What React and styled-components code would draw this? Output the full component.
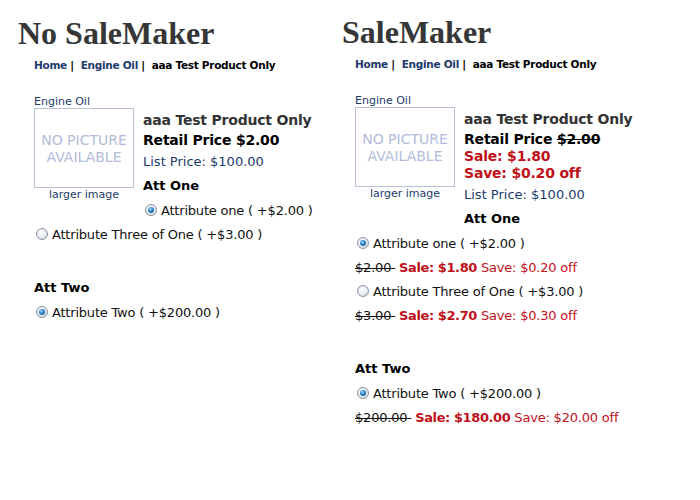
import React from 'react';
import styled, { createGlobalStyle } from 'styled-components';

const Global = createGlobalStyle`
  body {
    margin: 0;
    background: #fff;
    font-family: "DejaVu Sans", Verdana, sans-serif;
    color: #000;
  }
`;

const Page = styled.div`
  display: flex;
  width: 700px;
  height: 500px;
`;

const Column = styled.div`
  width: 321px;
  padding-left: 34px;
  box-sizing: border-box;
  padding-top: ${(p) => p.$top}px;
`;

const Heading = styled.h1`
  margin: 0 0 0 ${(p) => p.$offset}px;
  font-family: "Liberation Serif", "Times New Roman", serif;
  font-size: 32px;
  line-height: 36px;
  font-weight: bold;
  color: #363636;
`;

const Crumbs = styled.div`
  margin-top: 6px;
  font-size: 10.5px;
  letter-spacing: -0.28px;
  line-height: 16px;
  font-weight: bold;
  color: #000;
  white-space: nowrap;
`;

const CrumbLink = styled.span`
  color: #1d3a6c;
`;

const Product = styled.div`
  margin-top: 22px;
`;

const ImageBlock = styled.div`
  float: left;
  width: 100px;
  text-align: center;
`;

const Category = styled.div`
  font-size: 11px;
  line-height: 13px;
  color: #1d3a6c;
  text-align: left;
`;

const NoPicture = styled.div`
  width: 100px;
  height: 80px;
  box-sizing: border-box;
  padding-top: 2px;
  border: 1px solid #b9c0d6;
  display: flex;
  align-items: center;
  justify-content: center;
  font-size: 14px;
  line-height: 17px;
  color: #b3bcda;
  text-align: center;
`;

const Caption = styled.div`
  font-size: 11px;
  line-height: 13px;
  color: #1d3a6c;
`;

const Info = styled.div`
  margin-left: 109px;
  padding-top: 15px;
`;

const Title = styled.div`
  font-size: 14px;
  letter-spacing: -0.2px;
  line-height: 20px;
  font-weight: bold;
  color: #333;
  white-space: nowrap;
`;

const Price = styled.div`
  margin-top: 2px;
  font-size: 14px;
  letter-spacing: -0.2px;
  line-height: 17px;
  font-weight: bold;
  color: #000;
`;

const Old = styled.s`
  text-decoration-thickness: 1px;
`;

const SaleLine = styled.div`
  color: #c0101a;
`;

const ListPrice = styled.div`
  margin-top: 3px;
  font-size: 13px;
  line-height: 20px;
  color: #1d3a6c;
`;

const AttName = styled.div`
  clear: ${(p) => (p.$clear ? 'left' : 'none')};
  margin-top: ${(p) => p.$gap}px;
  font-size: 13px;
  line-height: 20px;
  font-weight: bold;
`;

const Options = styled.div`
  margin-top: 2px;
`;

const Row = styled.div`
  display: flex;
  align-items: center;
  height: 24px;
  font-size: 13px;
  letter-spacing: -0.2px;
  color: #111;
  white-space: nowrap;
`;

const Radio = styled.span`
  position: relative;
  width: 12px;
  height: 12px;
  margin: 0 4px 0 2px;
  border-radius: 50%;
  box-sizing: border-box;
  border: 1px solid #8793a3;
  background: radial-gradient(circle at 40% 35%, #ffffff 0%, #e4e7ec 60%, #c3c8d0 100%);
  flex-shrink: 0;
  &::after {
    content: '';
    display: ${(p) => (p.$checked ? 'block' : 'none')};
    position: absolute;
    left: 2px;
    top: 2px;
    width: 6px;
    height: 6px;
    border-radius: 50%;
    background: radial-gradient(circle at 40% 35%, #a8dcff 0%, #2f82c8 45%, #0c3f75 100%);
  }
`;

const Strike = styled.s`
  text-decoration-thickness: 1px;
`;

const SaleBold = styled.b`
  color: #c0101a;
  letter-spacing: -0.4px;
`;

const SaveText = styled.span`
  color: #c0101a;
`;

const Option = ({ checked, label, sale }) => (
  <>
    <Row>
      <Radio $checked={checked} />
      {label}
    </Row>
    {sale && (
      <Row>
        <Strike>{sale.old}&nbsp;</Strike>
        &nbsp;<SaleBold>Sale: {sale.now}</SaleBold>&nbsp;
        <SaveText>Save: {sale.save} off</SaveText>
      </Row>
    )}
  </>
);

const Breadcrumb = () => (
  <Crumbs>
    <CrumbLink>Home</CrumbLink>&nbsp;|&nbsp;&nbsp;<CrumbLink>Engine Oil</CrumbLink>&nbsp;|&nbsp;&nbsp;aaa Test Product Only
  </Crumbs>
);

const Picture = () => (
  <ImageBlock>
    <Category>Engine Oil</Category>
    <NoPicture>NO PICTURE<br />AVAILABLE</NoPicture>
    <Caption>larger image</Caption>
  </ImageBlock>
);

const NoSale = () => (
  <Column $top={15}>
    <Heading $offset={-16}>No SaleMaker</Heading>
    <Breadcrumb />
    <Product>
      <Picture />
      <Info>
        <Title>aaa Test Product Only</Title>
        <Price>Retail Price $2.00</Price>
        <ListPrice>List Price: $100.00</ListPrice>
        <AttName $gap={4}>Att One</AttName>
        <Options>
          <Option checked label="Attribute one ( +$2.00 )" />
        </Options>
      </Info>
      <Row>
        <Radio />
        Attribute Three of One ( +$3.00 )
      </Row>
      <AttName $gap={32} $clear>Att Two</AttName>
      <Options>
        <Option checked label="Attribute Two ( +$200.00 )" />
      </Options>
    </Product>
  </Column>
);

const WithSale = () => (
  <Column $top={14}>
    <Heading $offset={-13}>SaleMaker</Heading>
    <Breadcrumb />
    <Product>
      <Picture />
      <Info>
        <Title>aaa Test Product Only</Title>
        <Price>
          Retail Price <Old>$2.00</Old>
          <SaleLine>Sale: $1.80</SaleLine>
          <SaleLine>Save: $0.20 off</SaleLine>
        </Price>
        <ListPrice>List Price: $100.00</ListPrice>
        <AttName $gap={4}>Att One</AttName>
      </Info>
      <Options>
        <Option checked label="Attribute one ( +$2.00 )" sale={{ old: '$2.00', now: '$1.80', save: '$0.20' }} />
        <Option label="Attribute Three of One ( +$3.00 )" sale={{ old: '$3.00', now: '$2.70', save: '$0.30' }} />
      </Options>
      <AttName $gap={32} $clear>Att Two</AttName>
      <Options>
        <Option checked label="Attribute Two ( +$200.00 )" sale={{ old: '$200.00', now: '$180.00', save: '$20.00' }} />
      </Options>
    </Product>
  </Column>
);

export default function App() {
  return (
    <>
      <Global />
      <Page>
        <NoSale />
        <WithSale />
      </Page>
    </>
  );
}
